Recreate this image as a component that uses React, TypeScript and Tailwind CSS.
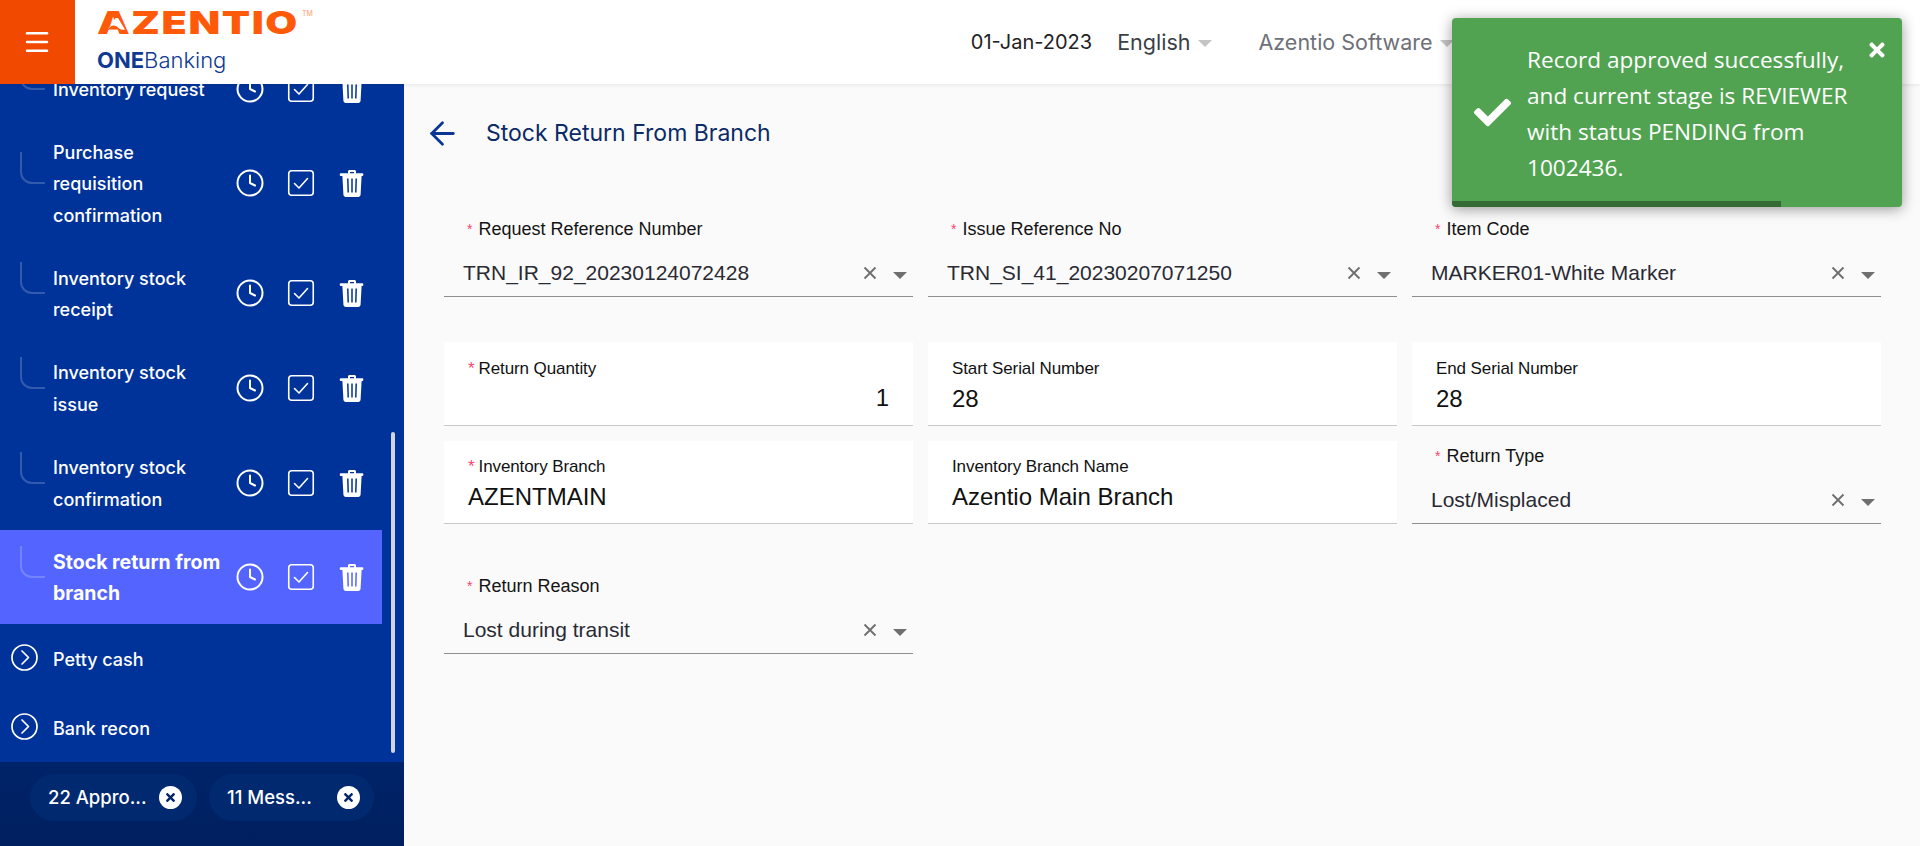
import { ArrowLeft, Clock, Menu } from 'lucide-react';
import { FaCheck, FaTimes } from 'react-icons/fa';

const subItems = [
  { label: 'Purchase requisition confirmation' },
  { label: 'Inventory stock receipt' },
  { label: 'Inventory stock issue' },
  { label: 'Inventory stock confirmation' },
];

function CheckIcon() {
  return (
    <svg width="30" height="30" viewBox="0 0 30 30" fill="none" stroke="white">
      <rect x="2.75" y="2.75" width="24.5" height="24.5" rx="3" strokeWidth="1.6" />
      <path d="M8.5 15.5l4.5 4.5 8.5-9.5" strokeWidth="1.6" strokeLinecap="round" strokeLinejoin="round" />
    </svg>
  );
}

function TrashIcon({ slot }: { slot: string }) {
  return (
    <svg width="30" height="30" viewBox="0 0 30 30">
      <path
        d="M11 5.2V3.6c0-.9.7-1.6 1.6-1.6h4.8c.9 0 1.6.7 1.6 1.6v1.6h6.4c.5 0 .9.4.9.9v1c0 .5-.4.9-.9.9H24.6l-1 18.6c-.1 1.3-1.1 2.4-2.4 2.4H8.8c-1.3 0-2.3-1.1-2.4-2.4L5.4 7.9H3.7c-.5 0-.9-.4-.9-.9V6.100c0-.5.4-.9.9-.9zM13 5.200h4V4h-4z"
        fill="white"
        fillRule="evenodd"
      />
      <path d="M10.800 10.500l.4 14M15 10.500v14M19.200 10.500l-.4 14" stroke={slot} strokeWidth="1.500" fill="none" />
    </svg>
  );
}

function RowIcons({ slot }: { slot: string }) {
  return (
    <div className="ml-auto mr-[15px] flex shrink-0 items-center gap-[21px]">
      <Clock size={30} color="white" strokeWidth={1.6} />
      <CheckIcon />
      <TrashIcon slot={slot} />
    </div>
  );
}

function Curve() {
  return <div className="mb-[30px] h-[32px] w-[25px] shrink-0 rounded-bl-[12px] border-b-2 border-l-2 border-white/20"></div>;
}

function Required({ big }: { big?: boolean }) {
  return <span className={big ? 'mr-[4px] text-[17px] text-[#f5456e]' : 'mr-[6px] text-[14px] text-[#f5456e]'}>*</span>;
}

function ClearIcon() {
  return (
    <svg className="ml-auto" width="14" height="14" viewBox="0 0 14 14" stroke="#6f6f6f" strokeWidth="1.900">
      <path d="M1.500 1.500l11 11M12.500 1.500l-11 11" />
    </svg>
  );
}

function SelectField({ label, value }: { label: string; value: string }) {
  return (
    <div className="h-[83px] border-b border-[#8f8f8f] pl-[19px] pr-[6px]">
      <div className="-ml-[3px] flex h-[25px] items-end pl-[7px] text-[18px] leading-[20px] text-[#141414]">
        <Required />
        {label}
      </div>
      <div className="mt-[22px] flex items-center text-[21px] leading-[24px] text-[#2a2a33]">
        <span>{value}</span>
        <ClearIcon />
        <span className="ml-[16px] mt-[4px] h-0 w-0 border-x-[7px] border-t-[7px] border-x-transparent border-t-[#6f6f6f]"></span>
      </div>
    </div>
  );
}

function InputField({
  label,
  value,
  required,
  right,
  small,
}: {
  label: string;
  value: string;
  required?: boolean;
  right?: boolean;
  small?: boolean;
}) {
  return (
    <div className={`border-b border-[#c9c9c9] bg-white px-[24px] ${small ? 'h-[83px]' : 'h-[84px]'}`}>
      <div className={`tracking-[-0.1px] text-[17px] leading-[20px] text-[#111] ${small ? 'pt-[16px]' : 'pt-[17px]'}`}>
        {required && <Required big />}
        {label}
      </div>
      <div className={`text-[24px] leading-[28px] text-[#111] ${right ? 'mt-[5px] text-right' : small ? 'mt-[6px]' : 'mt-[6px]'}`}>
        {value}
      </div>
    </div>
  );
}

function HeaderCaret() {
  return <span className="mt-[2px] ml-[8px] h-0 w-0 border-x-[7px] border-t-[7px] border-x-transparent border-t-[#c4c4c4]"></span>;
}

function ChevronCircle() {
  return (
    <svg width="27" height="27" viewBox="0 0 27 27" fill="none" stroke="white" strokeWidth="1.700" className="-mt-[3px]">
      <circle cx="13.500" cy="13.500" r="12.500" />
      <path d="M11 7l6.500 6.500L11 20" strokeLinecap="round" strokeLinejoin="round" />
    </svg>
  );
}

export default function App() {
  return (
    <div className="relative flex h-[846px] w-[1920px] flex-col overflow-hidden bg-[#fafafa] font-['Liberation_Sans',sans-serif]">
      {/* Header */}
      <header className="relative z-10 flex h-[84px] shrink-0 items-center bg-white font-['Inter',sans-serif] shadow-[0_1px_4px_rgba(0,0,0,0.08)]">
        <div className="flex h-[84px] w-[75px] items-center justify-center bg-[#f24900] pr-[2px]">
          <Menu size={30} color="white" strokeWidth={2} />
        </div>
        <div className="ml-[22px] flex h-full flex-col">
          <div className="relative mt-[7px] flex h-[32px] items-center">
            <span className="origin-left scale-x-[1.33] text-[31px] leading-[32px] font-black tracking-[1.2px] text-[#ff5a0a]">
              AZENTIO
            </span>
            <svg className="absolute top-[10px] left-[7px]" width="24" height="16" viewBox="0 0 24 16" fill="white">
              <path d="M11.500 1L4 12C8 7.500 11 7.500 14 10.500C16 12.500 18 13 21 12.500L14 1Z" />
            </svg>
            <span className="absolute top-[3px] left-[205px] text-[7px] leading-[8px] text-[#ff9c6a]">TM</span>
          </div>
          <div className="mt-[7px] text-[22px] leading-[28px] text-[#0f3a94]">
            <span className="font-bold">ONE</span>
            <span className="font-light">Banking</span>
          </div>
        </div>
        <div className="ml-[722px] flex items-center">
          <span className="text-[20px] text-[#222]">01-Jan-2023</span>
          <span className="ml-[25px] text-[21.5px] text-[#3a3f48]">English</span>
          <HeaderCaret />
          <span className="ml-[46px] text-[21.5px] text-[#6e7178]">Azentio Software</span>
          <HeaderCaret />
        </div>
      </header>

      <div className="flex min-h-0 flex-1">
        {/* Sidebar */}
        <aside className="relative flex w-[404px] shrink-0 flex-col bg-[#003399] font-['Inter',sans-serif] text-[18px] leading-[31.5px] font-medium text-white">
          <div className="h-[678px] overflow-hidden">
            <div className="-mt-[26px]">
              <div className="flex h-[62px] w-[382px] items-center pl-[20px]">
                <Curve />
                <span className="ml-[8px] translate-y-[1px]">Inventory request</span>
                <RowIcons slot="#003399" />
              </div>
              {subItems.map((item) => (
                <div key={item.label} className="flex w-[382px] items-center py-[15.8px] pl-[20px]">
                  <Curve />
                  <span className="ml-[8px] w-[170px] translate-y-[1px]">{item.label}</span>
                  <RowIcons slot="#003399" />
                </div>
              ))}
              <div className="flex w-[382px] items-center bg-[#5465ff] py-[15.8px] pl-[20px]">
                <Curve />
                <span className="ml-[8px] w-[176px] translate-y-[1px] text-[19.5px] font-bold">Stock return from branch</span>
                <RowIcons slot="#5465ff" />
              </div>
              <div className="flex h-[69px] items-center pl-[11px]">
                <ChevronCircle />
                <span className="ml-[15px] mt-[2px]">Petty cash</span>
              </div>
              <div className="flex h-[69px] items-center pl-[11px]">
                <ChevronCircle />
                <span className="ml-[15px] mt-[2px]">Bank recon</span>
              </div>
            </div>
          </div>
          {/* scrollbar thumb */}
          <div className="absolute top-[348px] left-[391px] h-[321px] w-[4px] rounded-full bg-[#cfd4dd]"></div>
          <div className="flex flex-1 items-start gap-[12px] bg-gradient-to-b from-[#002469] to-[#001f5f] pt-[12px] pl-[30px]">
            <div className="flex h-[47px] w-[167px] items-center rounded-full bg-[#00296f] pl-[18px] text-[18.500px]">
              <span>22 Appro...</span>
              <span className="ml-auto mr-[15px] flex h-[23px] w-[23px] items-center justify-center rounded-full bg-white">
                <FaTimes size={13} color="#002469" />
              </span>
            </div>
            <div className="flex h-[47px] w-[165px] items-center rounded-full bg-[#00296f] pl-[18px] text-[18.500px]">
              <span>11 Mess...</span>
              <span className="ml-auto mr-[14px] flex h-[23px] w-[23px] items-center justify-center rounded-full bg-white">
                <FaTimes size={13} color="#002469" />
              </span>
            </div>
          </div>
        </aside>

        {/* Main */}
        <main className="flex-1 pl-[40px] pr-[39px]">
          <div className="flex h-[98px] items-center font-['Inter',sans-serif]">
            <ArrowLeft size={37} color="#0a3794" strokeWidth={1.8} className="-ml-[20px]" />
            <h1 className="ml-[25px] text-[23px] leading-[32px] font-normal text-[#0b2a66]">Stock Return From Branch</h1>
          </div>
          <div className="mt-[32px] grid grid-cols-3 gap-x-[15px]">
            <SelectField label="Request Reference Number" value="TRN_IR_92_20230124072428" />
            <SelectField label="Issue Reference No" value="TRN_SI_41_20230207071250" />
            <SelectField label="Item Code" value="MARKER01-White Marker" />
          </div>
          <div className="mt-[45px] grid grid-cols-3 gap-x-[15px]">
            <InputField required right label="Return Quantity" value="1" />
            <InputField label="Start Serial Number" value="28" />
            <InputField label="End Serial Number" value="28" />
          </div>
          <div className="mt-[15px] grid grid-cols-3 gap-x-[15px]">
            <InputField required small label="Inventory Branch" value="AZENTMAIN" />
            <InputField small label="Inventory Branch Name" value="Azentio Main Branch" />
            <SelectField label="Return Type" value="Lost/Misplaced" />
          </div>
          <div className="mt-[47px] grid grid-cols-3 gap-x-[15px]">
            <SelectField label="Return Reason" value="Lost during transit" />
          </div>
        </main>
      </div>

      {/* Toast */}
      <div className="absolute top-[18px] left-[1452px] z-20 flex h-[189px] w-[450px] overflow-hidden rounded-[4px] bg-[#51a351] font-['Open_Sans',sans-serif] text-white shadow-[0_2px_14px_rgba(0,0,0,0.4)]">
        <div className="flex w-[75px] shrink-0 items-center justify-center pl-[6px]">
          <FaCheck size={37} />
        </div>
        <p className="mt-[24px] w-[340px] text-[22.600px] leading-[36px]">
          Record approved successfully, and current stage is REVIEWER with status PENDING from 1002436.
        </p>
        <FaTimes size={22} className="absolute top-[21px] right-[14px]" />
        <div className="absolute bottom-0 left-0 h-[6px] w-[329px] bg-[#356a35]"></div>
      </div>
    </div>
  );
}
